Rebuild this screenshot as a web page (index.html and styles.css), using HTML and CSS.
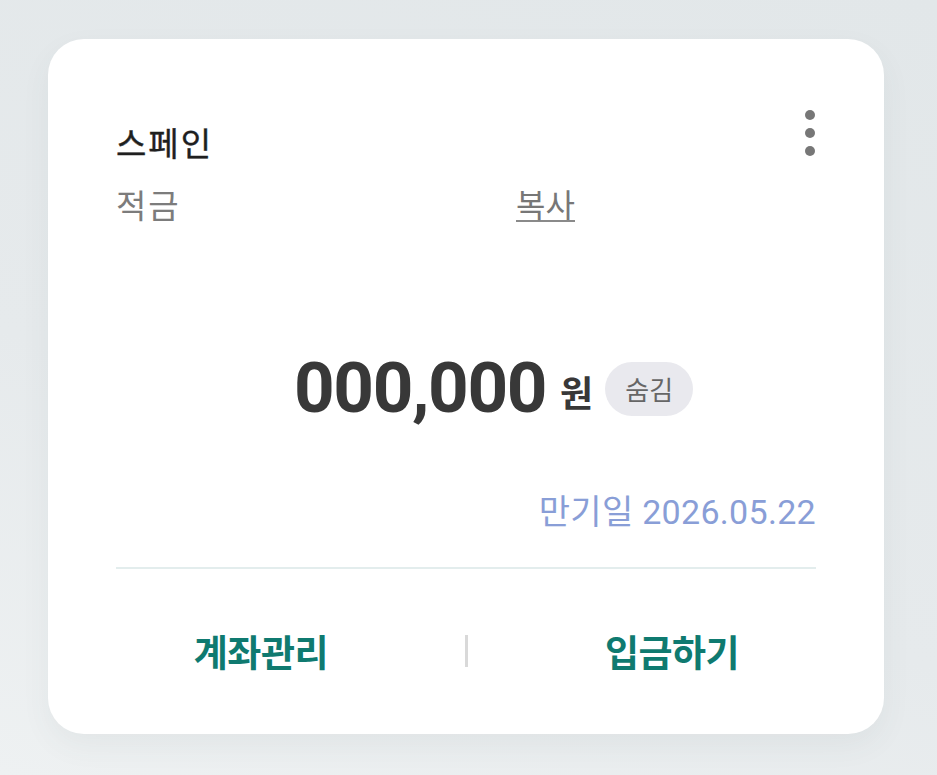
FILE: index.html
```html
<!DOCTYPE html>
<html lang="ko">
<head>
<meta charset="utf-8">
<title>스페인 적금</title>
<link rel="stylesheet" href="styles.css">
</head>
<body>
<div class="card">
  <div class="head">
    <div class="title">스페인</div>
    <div class="more" aria-label="더보기">
      <span class="dot"></span><span class="dot"></span><span class="dot"></span>
    </div>
  </div>
  <div class="sub">
    <span class="type">적금</span>
    <span class="copy">복사</span>
  </div>
  <div class="amount-row">
    <span class="amount">000,000</span>
    <span class="won">원</span>
    <span class="pill">숨김</span>
  </div>
  <div class="due">만기일 2026.05.22</div>
  <div class="divider"></div>
  <div class="actions">
    <span class="btn">계좌관리</span>
    <span class="sep"></span>
    <span class="btn">입금하기</span>
  </div>
</div>
</body>
</html>
```
FILE: styles.css
```css
html, body {
  margin: 0;
  padding: 0;
}
body {
  width: 937px;
  height: 775px;
  overflow: hidden;
  background: linear-gradient(200deg, #e2e7e9 0%, #e6eaec 60%, #eef1f2 100%);
  font-family: Roboto, "Noto Sans CJK KR", sans-serif;
}
.card {
  box-sizing: border-box;
  margin: 39px 0 0 48px;
  width: 836px;
  height: 695px;
  padding: 0 68px;
  background: #fff;
  border-radius: 36px;
  box-shadow: 0 12px 30px rgba(60, 80, 90, 0.06);
  display: flex;
  flex-direction: column;
}
.head {
  display: flex;
  justify-content: space-between;
  align-items: flex-start;
  padding-top: 83px;
}
.title {
  font-family: "Noto Sans CJK KR", sans-serif;
  font-weight: 400;
  font-size: 33px;
  line-height: 40px;
  color: #1f1f1f;
  letter-spacing: 2px;
  -webkit-text-stroke: 0.4px #1f1f1f;
}
.more {
  display: flex;
  flex-direction: column;
  gap: 8px;
  margin-top: -12px;
  margin-right: 1px;
}
.dot {
  width: 10px;
  height: 10px;
  border-radius: 50%;
  background: #777;
}
.sub {
  display: flex;
  margin-top: 22px;
  font-family: "Noto Sans CJK KR", sans-serif;
  font-size: 33px;
  line-height: 40px;
}
.type {
  width: 400px;
  color: #7c7c7c;
  letter-spacing: 2px;
}
.copy {
  color: #777;
  font-size: 32px;
  line-height: 34px;
  height: 34px;
  margin-top: 2px;
  border-bottom: 2px solid #8a8a8a;
}
.amount-row {
  display: flex;
  justify-content: flex-start;
  align-items: center;
  margin-top: 124px;
  height: 80px;
  padding-left: 178px;
}
.amount {
  font-family: Roboto, sans-serif;
  font-weight: 700;
  font-size: 71px;
  letter-spacing: -1.4px;
  color: #383838;
  line-height: 80px;
}
.won {
  font-family: "Noto Sans CJK KR", sans-serif;
  font-weight: 700;
  font-size: 36px;
  color: #383838;
  margin-left: 14px;
  margin-top: 6px;
}
.pill {
  font-family: "Noto Sans CJK KR", sans-serif;
  font-size: 26px;
  color: #666;
  background: #e9e9ee;
  border-radius: 27px;
  height: 54px;
  line-height: 54px;
  padding: 0 20px;
  margin-left: 12px;
  margin-top: 2px;
}
.due {
  margin-top: 64px;
  text-align: right;
  font-size: 34px;
  line-height: 40px;
  color: #899ed7;
  letter-spacing: 0.3px;
}
.divider {
  margin-top: 35px;
  height: 2px;
  background: #e3eded;
}
.actions {
  display: flex;
  justify-content: center;
  align-items: center;
  gap: 137px;
  margin-top: 62px;
  padding-left: 1px;
}
.btn {
  font-family: "Noto Sans CJK KR", sans-serif;
  font-weight: 700;
  font-size: 37px;
  line-height: 40px;
  letter-spacing: -0.5px;
  color: #0f7a70;
}
.sep {
  width: 3px;
  height: 32px;
  background: #d9d9d9;
}
```
